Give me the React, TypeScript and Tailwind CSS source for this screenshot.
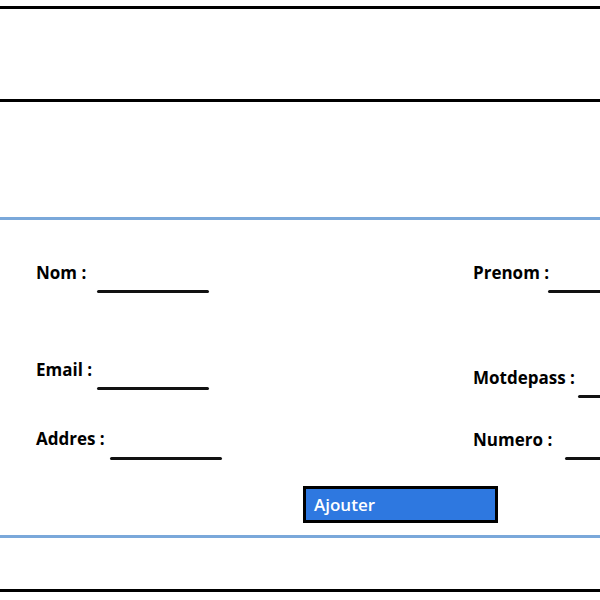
import React from "react";

function Field({ label, labelW, lineW, lineMt, mt }: { label: string; labelW: string; lineW: string; lineMt: string; mt: string }) {
  return (
    <div className={`flex items-start ${mt}`}>
      <div className={`${labelW} shrink-0 text-[17px] leading-[20px] font-bold text-black whitespace-nowrap`}>{label}</div>
      <div className={`${lineW} shrink-0 ${lineMt} h-[3px] rounded-full bg-[#111]`} />
    </div>
  );
}

export default function App() {
  return (
    <div className="w-[600px] h-[600px] bg-white overflow-hidden flex flex-col" style={{ fontFamily: "'Open Sans', Lato, sans-serif" }}>
      <div className="h-[6px]" />
      <div className="h-[3px] bg-black" />
      <div className="h-[90px]" />
      <div className="h-[3px] bg-black" />
      <div className="h-[115px]" />
      <div className="h-[3px] bg-[#7aa8da]" />
      <div className="h-[315px] flex flex-col pt-[43px]">
        <div className="flex">
          <div className="w-[473px] shrink-0 pl-[36px] flex flex-col">
            <Field label="Nom :" labelW="w-[61px]" lineW="w-[112px]" lineMt="mt-[27px]" mt="" />
            <Field label="Email :" labelW="w-[61px]" lineW="w-[112px]" lineMt="mt-[27px]" mt="mt-[67px]" />
            <Field label="Addres :" labelW="w-[74px]" lineW="w-[112px]" lineMt="mt-[28px]" mt="mt-[39px]" />
          </div>
          <div className="flex-1 flex flex-col overflow-hidden">
            <Field label="Prenom :" labelW="w-[75px]" lineW="w-[112px]" lineMt="mt-[27px]" mt="" />
            <Field label="Motdepass :" labelW="w-[105px]" lineW="w-[112px]" lineMt="mt-[27px]" mt="mt-[75px]" />
            <Field label="Numero :" labelW="w-[92px]" lineW="w-[112px]" lineMt="mt-[27px]" mt="mt-[32px]" />
          </div>
        </div>
        <div className="mt-[26px] pl-[303px]">
          <div className="w-[195px] h-[37px] border-[3px] border-black bg-[#2e78e0] flex items-center pl-[8px] text-white text-[17px] font-semibold">
            Ajouter
          </div>
        </div>
      </div>
      <div className="h-[3px] bg-[#7aa8da]" />
      <div className="h-[51px]" />
      <div className="h-[3px] bg-black" />
    </div>
  );
}
